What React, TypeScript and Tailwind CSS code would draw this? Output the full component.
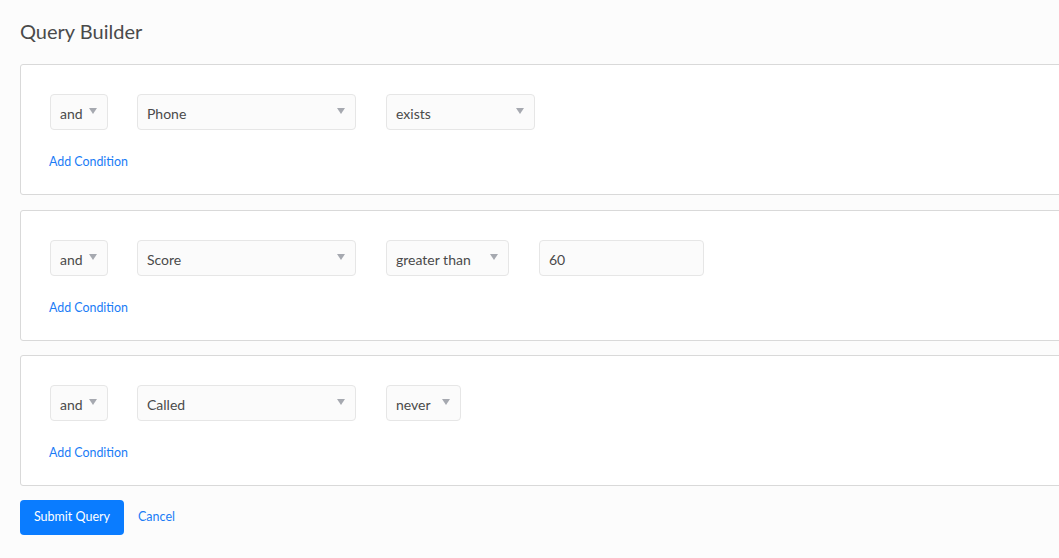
import React from 'react';

const Caret = () => (
  <svg width="8" height="6" viewBox="0 0 8 6" className="shrink-0">
    <path d="M0 0 H8 L4 6 Z" fill="#a6a9b0" />
  </svg>
);

const Select: React.FC<{ label: string; width: string }> = ({ label, width }) => (
  <div
    className={`${width} h-9 flex items-start justify-between pl-[9px] pr-[10px] bg-[#fbfbfb] border border-[#e6e6e6] rounded-[4px]`}
  >
    <span className="text-[14px] text-[#4a4a4a] leading-9 pt-[1px]">{label}</span>
    <span className="pt-[13px]">
      <Caret />
    </span>
  </div>
);

type Row = { field: string; op: string; opWidth: string; value?: string };

const rows: Row[] = [
  { field: 'Phone', op: 'exists', opWidth: 'w-[149px]' },
  { field: 'Score', op: 'greater than', opWidth: 'w-[123px]', value: '60' },
  { field: 'Called', op: 'never', opWidth: 'w-[75px]' },
];

export default function App() {
  return (
    <div
      className="min-h-[558px] w-full overflow-hidden bg-[#fcfcfc] px-5 pt-[19px]"
      style={{ fontFamily: 'Lato, "Open Sans", sans-serif' }}
    >
      <h1 className="text-[20px] text-[#4a4a4a] leading-6 mb-[21px]">Query Builder</h1>

      <div className="flex flex-col gap-[14.5px] w-[1050px]">
        {rows.map((r) => (
          <div
            key={r.field}
            className="bg-white border border-[#d9d9d9] rounded-[3px] pl-[29px] pt-[29px] h-[131px]"
          >
            <div className="flex items-center">
              <Select label="and" width="w-[58px]" />
              <div className="ml-[29px]">
                <Select label={r.field} width="w-[219px]" />
              </div>
              <div className="ml-[30px]">
                <Select label={r.op} width={r.opWidth} />
              </div>
              {r.value && (
                <div className="ml-[30px] w-[165px] h-9 bg-[#fbfbfb] border border-[#e6e6e6] rounded-[4px] pl-[9px] text-[14px] text-[#4a4a4a] leading-9 pt-[1px]">
                  {r.value}
                </div>
              )}
            </div>
            <div className="mt-[24px] -ml-[1px] text-[12.4px] text-[#1a7cf6] leading-4">Add Condition</div>
          </div>
        ))}
      </div>

      <div className="flex items-center mt-[14px]">
        <button className="h-[35px] w-[104px] bg-[#0a7cff] text-white text-[12.5px] rounded-[4px]">
          Submit Query
        </button>
        <span className="ml-[14px] text-[12.5px] text-[#1a7cf6]">Cancel</span>
      </div>
    </div>
  );
}
